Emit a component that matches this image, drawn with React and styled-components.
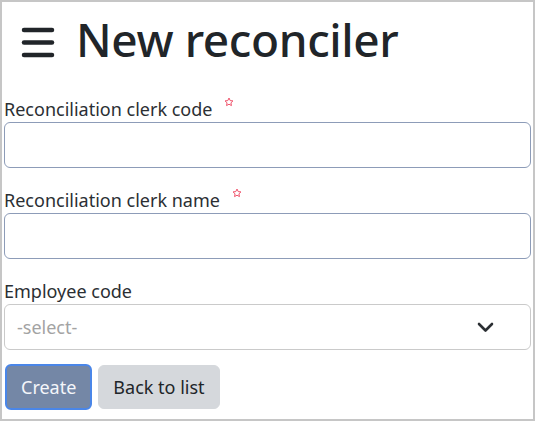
import React from 'react';
import styled, { createGlobalStyle } from 'styled-components';

const GlobalStyle = createGlobalStyle`
  html, body {
    margin: 0;
    padding: 0;
    background: #ffffff;
  }
  * {
    box-sizing: border-box;
  }
`;

const Frame = styled.div`
  width: 535px;
  height: 421px;
  border: 2px solid #c6c6c6;
  padding: 0 2px;
  font-family: 'Noto Sans', 'Open Sans', sans-serif;
  color: #212529;
  overflow: hidden;
`;

const Header = styled.div`
  display: flex;
  align-items: center;
  gap: 20px;
  height: 93px;
  padding: 0 0 14px 16px;
`;

const Title = styled.h1`
  margin: 0 0 6px;
  font-size: 46px;
  font-weight: 500;
  letter-spacing: -0.4px;
  line-height: 1;
`;

const Field = styled.div`
  display: flex;
  flex-direction: column;
  margin-bottom: 18px;
`;

const Label = styled.label`
  display: flex;
  align-items: flex-start;
  gap: 12px;
  height: 25px;
  margin-bottom: 2px;
  padding-top: 2px;
  font-size: 18px;
  line-height: 25px;
  color: #2b2f33;
`;

const Star = styled.svg`
  margin-top: 0;
`;

const TextInput = styled.input`
  width: 100%;
  height: 46px;
  border: 1.5px solid #8d9cb8;
  border-radius: 6px;
  padding: 0 12px;
  font: inherit;
  font-size: 18px;
  outline: none;
`;

const SelectBox = styled.div`
  display: flex;
  align-items: center;
  justify-content: space-between;
  height: 46px;
  border: 1.5px solid #cacaca;
  border-radius: 6px;
  padding: 0 36px 0 12px;
  font-size: 18px;
  color: #a3a3a3;
`;

const Actions = styled.div`
  display: flex;
  align-items: center;
  gap: 6px;
  margin-top: -4px;
  padding-left: 1px;
`;

const Button = styled.button`
  height: ${p => (p.primary ? '46px' : '44px')};
  padding: 0 14px;
  border: ${p => (p.primary ? '2px solid #4a86e8' : '1px solid #d5d8dc')};
  border-radius: 6px;
  background: ${p => (p.primary ? '#7487a6' : '#d5d8dc')};
  color: ${p => (p.primary ? '#f4f6fa' : '#212529')};
  font-family: inherit;
  font-size: 18px;
`;

const Hamburger = () => (
  <svg width="36" height="32" viewBox="0 0 36 32">
    <g stroke="#212529" strokeWidth="4.5" strokeLinecap="round">
      <line x1="4" y1="4" x2="32" y2="4" />
      <line x1="4" y1="16.5" x2="32" y2="16.5" />
      <line x1="4" y1="29" x2="32" y2="29" />
    </g>
  </svg>
);

const RequiredStar = () => (
  <Star width="10" height="10" viewBox="0 0 24 24">
    <path
      d="M12 2.5l2.9 6.1 6.6.8-4.9 4.6 1.3 6.6L12 17.3l-5.9 3.3 1.3-6.6-4.9-4.6 6.6-.8z"
      fill="none"
      stroke="#f0546c"
      strokeWidth="2.4"
      strokeLinejoin="round"
    />
  </Star>
);

const Chevron = () => (
  <svg width="17" height="11" viewBox="0 0 17 11">
    <path d="M2 2l6.5 6.5L15 2" fill="none" stroke="#2b2f33" strokeWidth="2.6" strokeLinecap="round" strokeLinejoin="round" />
  </svg>
);

export default function App() {
  return (
    <>
      <GlobalStyle />
      <Frame>
        <Header>
          <Hamburger />
          <Title>New reconciler</Title>
        </Header>

        <Field>
          <Label>
            Reconciliation clerk code <RequiredStar />
          </Label>
          <TextInput />
        </Field>

        <Field>
          <Label>
            Reconciliation clerk name <RequiredStar />
          </Label>
          <TextInput />
        </Field>

        <Field>
          <Label>Employee code</Label>
          <SelectBox>
            <span>-select-</span>
            <Chevron />
          </SelectBox>
        </Field>

        <Actions>
          <Button primary>Create</Button>
          <Button>Back to list</Button>
        </Actions>
      </Frame>
    </>
  );
}
